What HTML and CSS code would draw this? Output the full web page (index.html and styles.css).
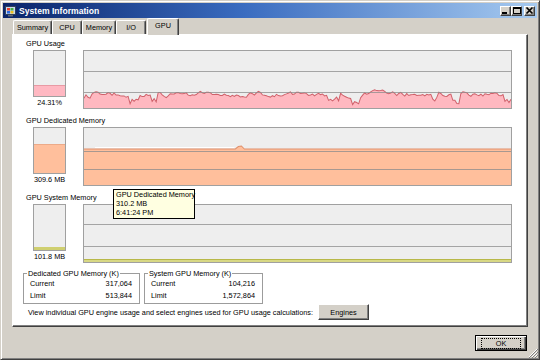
FILE: index.html
```html
<!DOCTYPE html>
<html lang="en">
<head>
    <meta charset="UTF-8">
    <title>System Information</title>
    <link rel="stylesheet" href="styles.css">
</head>
<body>
<div class="window">
    <div class="titlebar">
        <svg class="appicon" width="11" height="12" viewBox="0 0 11 12">
            <rect x="0.5" y="1.5" width="10" height="8" fill="#c8d8f0" stroke="#30405a"/>
            <rect x="2" y="3" width="3" height="2.5" fill="#e8402a"/>
            <rect x="5.5" y="3" width="3" height="2.5" fill="#48b040"/>
            <rect x="2" y="6" width="3" height="2.5" fill="#2a6ae0"/>
            <rect x="5.5" y="6" width="3" height="2.5" fill="#f0c020"/>
            <rect x="3" y="10" width="5" height="1.5" fill="#606878"/>
        </svg>
        <span class="title">System Information</span>
        <div class="capbtns">
            <span class="capbtn"><svg width="9" height="7" viewBox="0 0 9 7"><rect x="1" y="5" width="5" height="2" fill="#000"/></svg></span>
            <span class="capbtn"><svg width="9" height="7" viewBox="0 0 9 7"><rect x="1.5" y="0.5" width="7" height="6" fill="none" stroke="#000"/><rect x="1" y="0" width="8" height="2" fill="#000"/></svg></span>
            <span class="capbtn close"><svg width="9" height="7" viewBox="0 0 9 7"><path d="M1.5 0.5 L7.5 6.5 M7.5 0.5 L1.5 6.5" stroke="#000" stroke-width="1.6"/></svg></span>
        </div>
    </div>

    <div class="body">
        <div class="tabs">
            <span class="tab t-summary">Summary</span>
            <span class="tab t-cpu">CPU</span>
            <span class="tab t-memory">Memory</span>
            <span class="tab t-io">I/O</span>
            <span class="tab t-gpu active">GPU</span>
        </div>

        <div class="panel">
            <div class="section">
                <div class="label">GPU Usage</div>
                <div class="row">
                    <div class="meter-col">
                        <div class="meter"><div class="fill pink" style="height:24.31%"></div></div>
                        <div class="value">24.31%</div>
                    </div>
                    <div class="graph">
                        <svg class="chart" viewBox="0 0 426 57" preserveAspectRatio="none">
                            <polygon id="usageArea" class="area-pink" points=""/>
                            <polyline id="usageLine" class="line-pink" points=""/>
                            <line class="grid" x1="0" y1="20.5" x2="426" y2="20.5"/>
                            <line class="grid" x1="0" y1="41.5" x2="426" y2="41.5"/>
                        </svg>
                    </div>
                </div>
            </div>

            <div class="section">
                <div class="label">GPU Dedicated Memory</div>
                <div class="row">
                    <div class="meter-col">
                        <div class="meter"><div class="fill orange" style="height:64%"></div></div>
                        <div class="value">309.6 MB</div>
                    </div>
                    <div class="graph">
                        <svg class="chart" viewBox="0 0 426 57" preserveAspectRatio="none">
                            <polygon class="area-orange" points="0,57 0,21 151,21 154,18.5 157,18 160,21 426,21 426,57"/>
                            <polyline class="line-orange" points="0,21 151,21 154,18.5 157,18 160,21 426,21"/>
                            <line class="hilite" x1="11" y1="19.5" x2="150" y2="19.5"/>
                            <line class="grid" x1="0" y1="23.5" x2="426" y2="23.5"/>
                            <line class="grid" x1="0" y1="41.5" x2="426" y2="41.5"/>
                        </svg>
                    </div>
                </div>
            </div>

            <div class="section">
                <div class="label">GPU System Memory</div>
                <div class="row">
                    <div class="meter-col">
                        <div class="meter"><div class="fill yellow" style="height:6.6%"></div></div>
                        <div class="value">101.8 MB</div>
                    </div>
                    <div class="graph">
                        <svg class="chart" viewBox="0 0 426 57" preserveAspectRatio="none">
                            <line class="grid" x1="0" y1="19.5" x2="426" y2="19.5"/>
                            <line class="grid" x1="0" y1="41.5" x2="426" y2="41.5"/>
                            <rect class="area-yellow" x="0" y="54" width="426" height="3"/>
                            <line class="line-yellow" x1="0" y1="54.5" x2="426" y2="54.5"/>
                        </svg>
                    </div>
                </div>
            </div>

            <div class="groups">
                <fieldset class="group g-dedicated">
                    <legend>Dedicated GPU Memory (K)</legend>
                    <div class="stat"><span>Current</span><span>317,064</span></div>
                    <div class="stat"><span>Limit</span><span>513,844</span></div>
                </fieldset>
                <fieldset class="group g-system">
                    <legend>System GPU Memory (K)</legend>
                    <div class="stat"><span>Current</span><span>104,216</span></div>
                    <div class="stat"><span>Limit</span><span>1,572,864</span></div>
                </fieldset>
            </div>

            <div class="engines-row">
                <span>View individual GPU engine usage and select engines used for GPU usage calculations:</span>
                <button class="btn engines">Engines</button>
            </div>

            <div class="tooltip">
                <div>GPU Dedicated Memory</div>
                <div>310.2 MB</div>
                <div>6:41:24 PM</div>
            </div>
        </div>

        <div class="footer">
            <button class="btn ok"><span class="focus">OK</span></button>
        </div>
    </div>

    <svg class="grip" width="10" height="10" viewBox="0 0 10 10">
        <path d="M9 1 L1 9 M9 4 L4 9 M9 7 L7 9" stroke="#fff" stroke-width="1"/>
        <path d="M10 1 L1 10 M10 4 L4 10 M10 7 L7 10" stroke="#808080" stroke-width="1"/>
    </svg>
</div>
<script src="script.js"></script>
</body>
</html>
```

FILE: styles.css
```css
* {
    box-sizing: border-box;
}
body {
    margin: 0;
    background: #d4d0c8;
    font-family: "Liberation Sans", Arial, sans-serif;
    font-size: 7.3px;
    color: #000;
}
.window {
    position: relative;
    width: 540px;
    height: 360px;
    border: 1px solid;
    border-color: #d4d0c8 #404040 #404040 #d4d0c8;
    padding: 2px;
    box-shadow: inset 1px 1px #fff, inset -1px -1px #808080;
    background: #d4d0c8;
    display: flex;
    flex-direction: column;
}

/* title bar */
.titlebar {
    height: 15px;
    display: flex;
    align-items: center;
    padding: 0 2px;
    background: linear-gradient(to right, #0a246a, #3a6cc0 45%, #a6caf0);
}
.appicon {
    margin-right: 3px;
}
.title {
    color: #fff;
    font-weight: bold;
    font-size: 8.6px;
}
.capbtns {
    margin-left: auto;
    display: flex;
}
.capbtn {
    width: 11px;
    height: 10px;
    display: flex;
    align-items: center;
    justify-content: center;
    background: #d4d0c8;
    border: 1px solid;
    border-color: #fff #404040 #404040 #fff;
    box-shadow: inset -1px -1px #808080;
}
.capbtn.close {
    margin-left: 2px;
}

/* tabs */
.body {
    flex: 1;
    display: flex;
    flex-direction: column;
    padding: 0 9px 0 9px;
}
.tabs {
    height: 16px;
    display: flex;
    align-items: flex-end;
    padding-left: 1px;
    position: relative;
    z-index: 1;
}
.tab {
    height: 14px;
    display: flex;
    align-items: center;
    justify-content: center;
    border: 1px solid;
    border-bottom: none;
    border-color: #fff #404040 #404040 #fff;
    border-radius: 2px 2px 0 0;
    box-shadow: inset -1px 0 #808080;
    background: #d4d0c8;
}
.t-summary { width: 39px; }
.t-cpu { width: 30px; }
.t-memory { width: 34px; }
.t-io { width: 30px; }
.t-gpu { width: 32px; margin-left: 1px; }
.tab.active {
    height: 17px;
    margin-bottom: -1px;
    padding-bottom: 3px;
}

/* panel */
.panel {
    position: relative;
    height: 293px;
    background: #fff;
    border: 1px solid;
    border-color: #fff #404040 #404040 #fff;
    box-shadow: inset -1px -1px #808080;
    padding: 3px 15px 0 13px;
}
.section {
    margin-bottom: 6px;
}
.label {
    line-height: 12px;
    white-space: nowrap;
}
.row {
    display: flex;
    gap: 17px;
}
.meter-col {
    width: 33px;
    margin-left: 7px;
}
.meter {
    height: 47px;
    border: 1px solid #a0a0a0;
    background: #eeeeee;
    display: flex;
    flex-direction: column;
    justify-content: flex-end;
}
.fill.pink {
    background: #ffb8c2;
    border-top: 1px solid #e89aa4;
}
.fill.orange {
    background: #ffbf9c;
    border-top: 1px solid #ecaa88;
}
.fill.yellow {
    background: #cfcf70;
}
.value {
    text-align: center;
    line-height: 10px;
    margin-top: 1px;
    white-space: nowrap;
}
.graph {
    flex: 1;
    height: 59px;
    border: 1px solid #a0a0a0;
    background: #eeeeee;
}
.chart {
    display: block;
    width: 100%;
    height: 100%;
}
.grid {
    stroke: #8c8c8c;
    stroke-width: 1;
    opacity: 0.75;
}
.area-pink { fill: #ffb8c0; }
.line-pink { fill: none; stroke: #d0606a; stroke-width: 1; }
.area-orange { fill: #ffbf9c; }
.line-orange { fill: none; stroke: #e0906c; stroke-width: 1; }
.hilite { stroke: #ffffff; stroke-width: 1; }
.area-yellow { fill: #d8d884; }
.line-yellow { stroke: #b8b848; stroke-width: 1; }

/* group boxes */
.groups {
    display: flex;
    gap: 4px;
    margin-left: -3px;
    margin-top: 3px;
}
.group {
    margin: 0;
    padding: 0 7px 1px 6px;
    border: 1px solid #9c9c9c;
    min-width: 0;
}
.g-dedicated { width: 117px; }
.g-system { width: 119px; }
.group legend {
    padding: 0 1px;
    margin-left: -3px;
    line-height: 9px;
}
.stat {
    display: flex;
    justify-content: space-between;
    line-height: 12px;
}

/* engines row */
.engines-row {
    display: flex;
    align-items: center;
    gap: 5px;
    margin-left: 2px;
    height: 16px;
}
.btn {
    font-family: inherit;
    font-size: inherit;
    color: #000;
    background: #d4d0c8;
    border: 1px solid;
    border-color: #fff #404040 #404040 #fff;
    box-shadow: inset -1px -1px #808080;
    padding: 0;
}
.engines {
    width: 51px;
    height: 16px;
}

/* tooltip */
.tooltip {
    position: absolute;
    left: 100px;
    top: 154px;
    width: 82px;
    padding: 0 2px 1px;
    background: #ffffe1;
    border: 1px solid #000;
    line-height: 9px;
    white-space: nowrap;
}

/* footer */
.footer {
    display: flex;
    justify-content: flex-end;
    padding-top: 8px;
    padding-right: 1px;
}
.ok {
    width: 52px;
    height: 16px;
    border: 1px solid #000;
    box-shadow: inset 1px 1px #fff, inset -1px -1px #404040, inset -2px -2px #808080;
}
.ok .focus {
    display: inline-block;
    padding: 0 14px;
    line-height: 9px;
    outline: 1px dotted #000;
}
.grip {
    position: absolute;
    right: 1px;
    bottom: 1px;
}
```

FILE: script.js
```js
// build the noisy GPU usage history
var area = document.getElementById('usageArea');
var line = document.getElementById('usageLine');
var seed = 23;
function rnd() {
    seed = (seed * 16807) % 2147483647;
    return seed / 2147483647;
}
var w = 426, h = 57;
var pts = [];
var y = 43;
var dip = 0;
for (var x = 0; x <= w; x += 2) {
    // mean reverting jitter around the usage level
    y = y + (43 - y) * 0.3 + (rnd() - 0.5) * 4;
    if (dip <= 0 && rnd() < 0.04) dip = 3 + Math.floor(rnd() * 4);
    var v = y;
    if (dip > 0) {
        v += 3 + rnd() * 6;
        dip--;
    }
    pts.push(x + ',' + v.toFixed(1));
}
line.setAttribute('points', pts.join(' '));
area.setAttribute('points', '0,' + h + ' ' + pts.join(' ') + ' ' + w + ',' + h);
```
